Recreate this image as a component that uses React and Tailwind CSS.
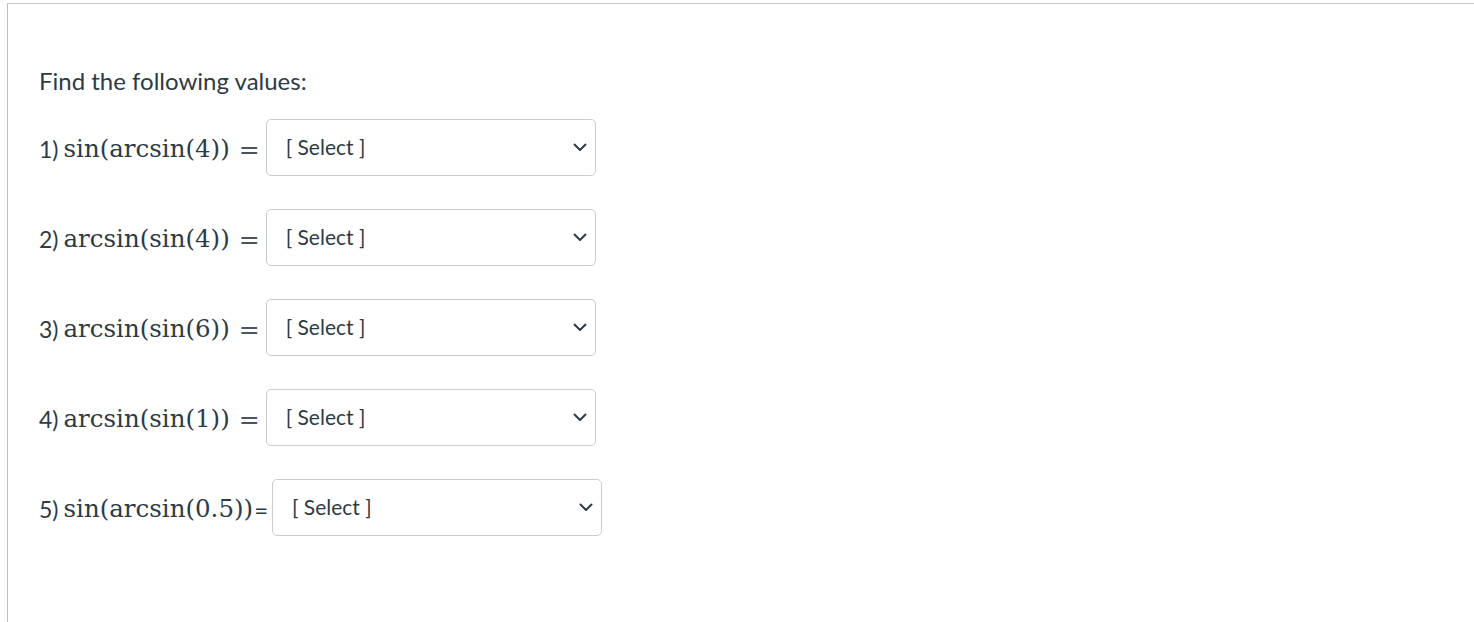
import React from "react";

const math = { fontFamily: '"DejaVu Serif", "Liberation Serif", serif' };
const lato = { fontFamily: 'Lato, "Liberation Sans", sans-serif' };

function Chevron() {
  return (
    <svg width="14" height="9" viewBox="0 0 14 9" className="text-[#2d3b45]">
      <path d="M1.5 1.5 L7 7 L12.5 1.5" fill="none" stroke="currentColor" strokeWidth="2" strokeLinecap="round" strokeLinejoin="round" />
    </svg>
  );
}

function SelectBox() {
  return (
    <div className="w-[330px] h-[57px] border border-[#c7cdd1] rounded-[5px] bg-white flex items-center justify-between pl-[19px] pr-[8px] shrink-0">
      <span className="text-[21px] text-[#2d3b45] -mt-[2px]">[ Select ]</span>
      <Chevron />
    </div>
  );
}

function Row({ n, expr, plainEq }) {
  return (
    <div className="flex items-center h-[57px]">
      <span className="text-[23px] text-[#2d3b45] mr-[5px] mt-[4px]">{n})</span>
      <span className="text-[24.5px] text-[#2d3b45] mt-[4px] whitespace-pre" style={math}>{expr}</span>
      {plainEq ? (
        <span className="text-[24px] text-[#2d3b45] ml-[1px] mr-[4px] mt-[4px]">=</span>
      ) : (
        <span className="text-[25px] text-[#4a565e] ml-[9px] mr-[6px] mt-[4px] font-light" style={math}>=</span>
      )}
      <SelectBox />
    </div>
  );
}

export default function App() {
  return (
    <div className="w-[1474px] h-[622px] bg-white overflow-hidden" style={lato}>
      <div className="ml-[7px] h-full border-l border-[#b8bfc4]">
        <div className="mt-[3px] h-full border-t border-[#c7cdd1] pl-[31px] pt-[60px]">
          <p className="text-[24px] leading-[36px] text-[#2d3b45] -mt-[1px]">Find the following values:</p>
          <div className="mt-[20px] flex flex-col gap-[33px]">
            <Row n="1" expr="sin(arcsin(4))" />
            <Row n="2" expr="arcsin(sin(4))" />
            <Row n="3" expr="arcsin(sin(6))" />
            <Row n="4" expr="arcsin(sin(1))" />
            <Row n="5" expr="sin(arcsin(0.5))" plainEq />
          </div>
        </div>
      </div>
    </div>
  );
}
